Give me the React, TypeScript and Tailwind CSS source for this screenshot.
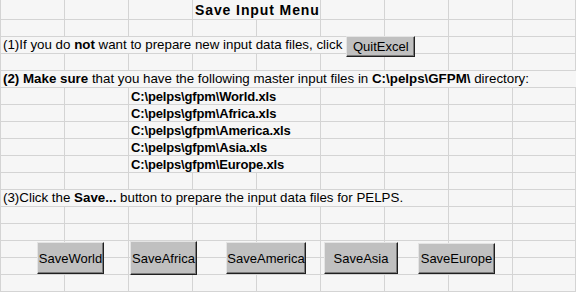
type Seg = { start: number; span: number; content?: React.ReactNode; className?: string };

const widthClass: Record<number, string> = {
  1: 'w-[64px]',
  2: 'w-[128px]',
  3: 'w-[192px]',
  7: 'w-[448px]',
  9: 'w-[576px]',
};

// one spreadsheet row, empty cells fill whatever the segments leave out
const Row = (props: { segs?: Seg[]; tall?: boolean }) => {
  const { segs = [], tall } = props;
  const cells: Seg[] = [];
  let c = 0;
  while (c < 9) {
    const seg = segs.find((s) => s.start === c);
    if (seg) {
      cells.push(seg);
      c += seg.span;
    } else {
      cells.push({ start: c, span: 1 });
      c += 1;
    }
  }
  return (
    <div className={`flex border-b border-[#d4d4d4] ${tall ? 'h-[20px]' : 'h-[17px]'}`}>
      {cells.map((cell) => (
        <div
          key={cell.start}
          className={`${widthClass[cell.span]} shrink-0 border-l border-[#d4d4d4] ${
            cell.start === 8 ? 'border-r' : ''
          } flex items-center whitespace-nowrap overflow-visible ${cell.className ?? ''}`}
        >
          {cell.content}
        </div>
      ))}
    </div>
  );
};

const XlButton = (props: { label: string; className: string }) => (
  <div
    className={`shrink-0 flex items-center justify-center bg-[#c0c0c0] text-[13px] text-black border border-t-[#e4e4e4] border-l-[#e4e4e4] border-b-[#202020] border-r-[#202020] shadow-[inset_-1px_-1px_#7a7a7a] ${props.className}`}
  >
    {props.label}
  </div>
);

const paths = ['World', 'Africa', 'America', 'Asia', 'Europe'];

export default function App() {
  return (
    <div
      className="relative w-[576px] h-[292px] overflow-hidden bg-[#f6f6f6] text-black text-[13.33px] leading-none"
      style={{ fontFamily: '"Liberation Sans", Arial, sans-serif' }}
    >
      <Row
        tall
        segs={[
          {
            start: 3,
            span: 2,
            className: 'pl-[2px] pt-[1px]',
            content: <span className="font-bold text-[14px] tracking-[0.9px]">Save Input Menu</span>,
          },
        ]}
      />
      <Row />
      <Row
        segs={[
          {
            start: 0,
            span: 7,
            className: 'pl-[2px]',
            content: (
              <>
                <span>
                  (1)If you do <b>not</b> want to prepare new input data files, click
                </span>
                <XlButton label="QuitExcel" className="self-start -mt-px ml-[4px] w-[69px] h-[21px] relative z-10" />
              </>
            ),
          },
        ]}
      />
      <Row />
      <Row
        segs={[
          {
            start: 0,
            span: 9,
            className: 'pl-[2px]',
            content: (
              <span>
                <b>(2) Make sure</b> that you have the following master input files in{' '}
                <b>C:\pelps\GFPM\</b> directory:
              </span>
            ),
          },
        ]}
      />
      {paths.map((p) => (
        <Row
          key={p}
          segs={[
            {
              start: 2,
              span: 3,
              className: 'pl-[2px]',
              content: <b className="text-[13px] tracking-[-0.15px]">C:\pelps\gfpm\{p}.xls</b>,
            },
          ]}
        />
      ))}
      <Row />
      <Row
        segs={[
          {
            start: 0,
            span: 7,
            className: 'pl-[2px]',
            content: (
              <span>
                (3)Click the <b>Save...</b> button to prepare the input data files for PELPS.
              </span>
            ),
          },
        ]}
      />
      <Row />
      <Row />
      <Row />
      <Row />
      <Row />

      {/* floating form buttons over the sheet */}
      <div className="absolute left-0 right-0 top-[241px] flex items-start">
        <XlButton label="SaveWorld" className="ml-[37px] mt-px w-[67px] h-[32px]" />
        <XlButton label="SaveAfrica" className="ml-[26px] w-[67px] h-[34px]" />
        <XlButton label="SaveAmerica" className="ml-[29px] mt-px w-[80px] h-[32px]" />
        <XlButton label="SaveAsia" className="ml-[18px] mt-px w-[74px] h-[32px]" />
        <XlButton label="SaveEurope" className="ml-[20px] mt-[2px] w-[77px] h-[31px]" />
      </div>
    </div>
  );
}
